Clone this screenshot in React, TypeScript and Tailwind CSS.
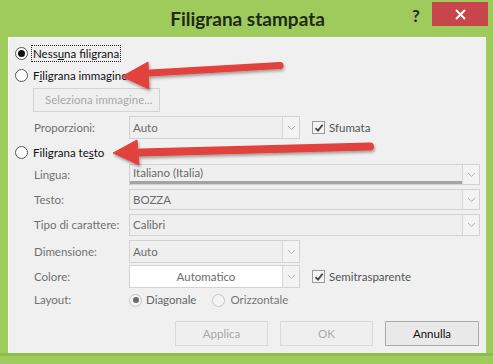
import React from "react";

function Radio({ checked, soft }: { checked?: boolean; soft?: boolean }) {
  return (
    <div
      className={
        soft
          ? "w-[13px] h-[13px] rounded-full border border-[#c4c4c4] bg-[#f4f4f4] flex items-center justify-center shrink-0"
          : "w-[13px] h-[13px] rounded-full border border-[#555] bg-white flex items-center justify-center shrink-0"
      }
    >
      {checked && (
        <div
          className={
            soft
              ? "w-[6px] h-[6px] rounded-full bg-[#6a6a6a]"
              : "w-[7px] h-[7px] rounded-full bg-[#111]"
          }
        />
      )}
    </div>
  );
}

function Check() {
  return (
    <div className="w-[13px] h-[13px] border border-[#9a9a9a] bg-[#f4f4f4] flex items-center justify-center shrink-0">
      <svg width="10" height="10" viewBox="0 0 10 10">
        <path d="M1.5 5.2 L4 7.6 L8.6 1.8" fill="none" stroke="#444" strokeWidth="1.8" />
      </svg>
    </div>
  );
}

function Chevron() {
  return (
    <svg width="9" height="6" viewBox="0 0 9 6">
      <path d="M1 1 L4.5 4.5 L8 1" fill="none" stroke="#b0b0b0" strokeWidth="1" />
    </svg>
  );
}

function Combo({
  wide,
  text,
  white,
  underline,
}: {
  wide?: boolean;
  text: string;
  white?: boolean;
  underline?: boolean;
}) {
  return (
    <div
      className={
        (wide ? "w-[351px] " : "w-[171px] ") +
        "h-full flex border border-[#d2d2d2] " +
        (white ? "bg-white" : "bg-[#efefef]")
      }
    >
      <div
        className={
          "flex-1 flex items-center text-[#6b6b6b] " +
          (white ? "justify-center" : "pl-[3px] ") +
          (underline ? " border-b-[3px] border-[#a3a3a3]" : "")
        }
      >
        {text}
      </div>
      <div className="w-[17px] border-l border-[#d8d8d8] bg-[#f3f3f3] flex items-center justify-center">
        <Chevron />
      </div>
    </div>
  );
}

function LabelRow({
  label,
  mt,
  h,
  children,
}: {
  label: string;
  mt: string;
  h: string;
  children: React.ReactNode;
}) {
  return (
    <div className={"flex items-center " + mt + " " + h}>
      <div className="w-[120px] pl-[25px] text-[#707070] shrink-0">{label}</div>
      {children}
    </div>
  );
}

function Btn({ label, enabled }: { label: string; enabled?: boolean }) {
  return (
    <div
      className={
        enabled
          ? "w-[94px] h-[25px] border border-[#acacac] bg-[#e9e9e9] flex items-center justify-center text-[#111]"
          : "w-[93px] h-[25px] border border-[#dadada] bg-[#efefef] flex items-center justify-center text-[#a8a8a8]"
      }
    >
      {label}
    </div>
  );
}

export default function App() {
  return (
    <div className="relative w-[493px] h-[364px] bg-[#9ecb5b] flex flex-col font-['Lato','Noto_Sans',sans-serif] text-[11.5px] leading-none overflow-hidden">
      {/* title bar */}
      <div className="h-[37px] flex items-start relative">
        <div className="flex-1 h-full flex items-center justify-center pl-[2px] pb-[1px] text-[19px] font-bold text-[#1f2a18]">
          Filigrana stampata
        </div>
        <div className="absolute left-[412px] top-[7px] text-[17px] font-bold text-[#1f2a18]">?</div>
        <div className="absolute left-[432px] top-[2px] w-[56px] h-[24px] bg-[#c8464b] flex items-center justify-center">
          <svg width="11" height="11" viewBox="0 0 11 11">
            <path d="M1 1 L10 10 M10 1 L1 10" stroke="#fff" strokeWidth="2" />
          </svg>
        </div>
      </div>

      {/* content */}
      <div className="ml-[8px] w-[478px] h-[316px] bg-[#f0f0f0] border-l border-t border-[#fafafa] flex flex-col">
        {/* Nessuna */}
        <div className="mt-[7px] h-[17px] flex items-center pl-[6px]">
          <Radio checked />
          <div className="ml-[3px] h-[17px] px-[1px] border border-dotted border-[#222] flex items-center text-[#111]">
            Ness<span className="underline">u</span>na filigrana
          </div>
        </div>
        {/* Filigrana immagine */}
        <div className="mt-[5px] h-[17px] flex items-center pl-[6px]">
          <Radio />
          <div className="ml-[5px] text-[#111]">
            F<span className="underline">i</span>ligrana immagine
          </div>
        </div>
        {/* Seleziona */}
        <div className="mt-[4px] h-[24px] pl-[24px] flex">
          <div className="w-[127px] h-full border border-[#d3d3d3] bg-[#efefef] flex items-center pl-[11px] text-[#a9a9a9]">
            Seleziona immagine...
          </div>
        </div>
        {/* Proporzioni */}
        <LabelRow label="Proporzioni:" mt="mt-[4px]" h="h-[23px]">
          <Combo text="Auto" />
          <div className="ml-[12px] flex items-center">
            <Check />
            <span className="ml-[4px] text-[#555]">Sfumata</span>
          </div>
        </LabelRow>
        {/* Filigrana testo */}
        <div className="mt-[5px] h-[17px] flex items-center pl-[6px]">
          <Radio />
          <div className="ml-[5px] text-[#111]">
            Filigrana te<span className="underline">s</span>to
          </div>
        </div>
        <LabelRow label="Lingua:" mt="mt-[3px]" h="h-[21px]">
          <Combo wide text="Italiano (Italia)" underline />
        </LabelRow>
        <LabelRow label="Testo:" mt="mt-[4px]" h="h-[21px]">
          <Combo wide text="BOZZA" />
        </LabelRow>
        <LabelRow label="Tipo di carattere:" mt="mt-[4px]" h="h-[22px]">
          <Combo wide text="Calibri" />
        </LabelRow>
        <LabelRow label="Dimensione:" mt="mt-[4px]" h="h-[23px]">
          <Combo text="Auto" />
        </LabelRow>
        <LabelRow label="Colore:" mt="mt-[2px]" h="h-[23px]">
          <Combo text="Automatico" white />
          <div className="ml-[12px] flex items-center">
            <Check />
            <span className="ml-[4px] text-[#555]">Semitrasparente</span>
          </div>
        </LabelRow>
        <LabelRow label="Layout:" mt="mt-[3px]" h="h-[18px]">
          <div className="flex items-center">
            <Radio checked soft />
            <span className="ml-[4px] text-[#666]">Diagonale</span>
            <div className="ml-[16px]">
              <Radio soft />
            </div>
            <span className="ml-[5px] text-[#777]">Orizzontale</span>
          </div>
        </LabelRow>
        <div className="mt-[12px] flex pl-[166px] gap-[12px]">
          <Btn label="Applica" />
          <Btn label="OK" />
          <Btn label="Annulla" enabled />
        </div>
      </div>
      <div className="flex-1 border-t-[3px] border-[#8dbb4c] mt-0" />

      {/* red arrows overlay */}
      <svg
        className="absolute left-0 top-0 pointer-events-none"
        width="493"
        height="364"
        viewBox="0 0 493 364"
      >
        <defs>
          <filter id="sh" x="-20%" y="-50%" width="140%" height="200%">
            <feDropShadow dx="1" dy="2" stdDeviation="1.5" floodColor="#000" floodOpacity="0.35" />
          </filter>
        </defs>
        <g filter="url(#sh)" fill="#e2423c" stroke="#e2423c">
          <path d="M150 73 L280 65.5" strokeWidth="7" strokeLinecap="round" fill="none" />
          <polygon points="122,76.5 148,62 149,89" strokeWidth="1" strokeLinejoin="round" />
          <path d="M140 152.5 L370 146.5" strokeWidth="8" strokeLinecap="round" fill="none" />
          <polygon points="113,153 137,140 139,165" strokeWidth="1" strokeLinejoin="round" />
        </g>
      </svg>
    </div>
  );
}
